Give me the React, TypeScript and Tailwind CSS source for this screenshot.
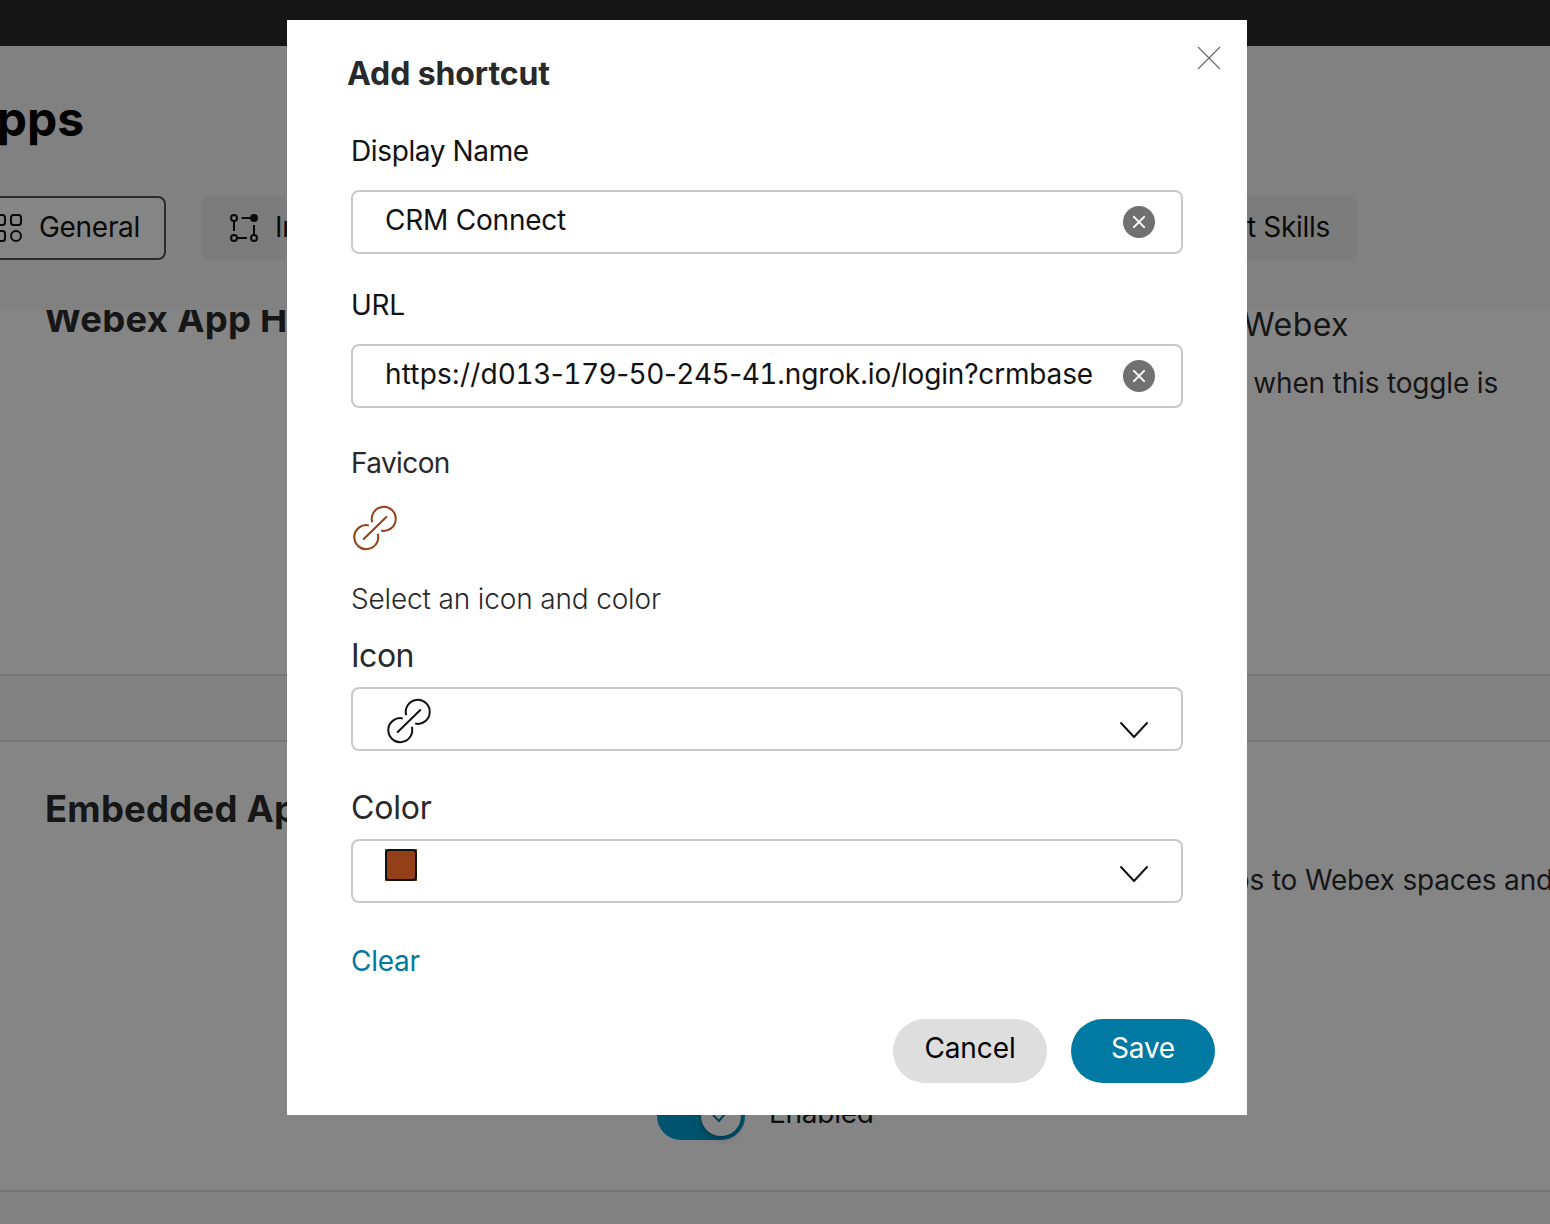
import type { ReactNode } from "react";

function LinkIcon({ className }: { className?: string }) {
  return (
    <svg width="48" height="48" viewBox="0 0 48 48" fill="none" stroke="currentColor" strokeWidth="2" strokeLinecap="round" className={className}>
      <path d="M21.2 18.2A12 12 0 1 1 30.2 26.6" strokeLinecap="butt" />
      <path d="M26.8 29.8A12 12 0 1 1 17.8 21.4" strokeLinecap="butt" />
      <path d="M12.7 35L35.3 13" />
    </svg>
  );
}

function GridIcon() {
  return (
    <svg width="28" height="28" viewBox="0 0 28 28" fill="none" stroke="currentColor" strokeWidth="2" className="shrink-0">
      <rect x="1" y="1" width="10" height="10" rx="2.5" />
      <rect x="17" y="1" width="10" height="10" rx="2.5" />
      <rect x="1" y="17" width="10" height="10" rx="2.5" />
      <circle cx="22" cy="22" r="5" />
    </svg>
  );
}

function NodesIcon() {
  return (
    <svg width="28" height="28" viewBox="0 0 28 28" fill="none" stroke="currentColor" strokeWidth="2" className="shrink-0">
      <circle cx="4" cy="4" r="3" />
      <circle cx="24" cy="4" r="3" fill="currentColor" />
      <circle cx="4" cy="24" r="3" />
      <circle cx="24" cy="24" r="3" />
      <path d="M11.5 4H21M4 7V17M24 11V21M7 24H17" />
    </svg>
  );
}

function Chevron({ className }: { className?: string }) {
  return (
    <svg width="30" height="18" viewBox="0 0 30 18" fill="none" stroke="#121212" strokeWidth="2" strokeLinecap="round" strokeLinejoin="round" className={className}>
      <path d="M2 2L15 16L28 2" />
    </svg>
  );
}

function ClearButton() {
  return (
    <button aria-label="Clear field" className="shrink-0">
      <svg width="32" height="32" viewBox="0 0 32 32" fill="none">
        <circle cx="16" cy="16" r="16" fill="#707070" />
        <path d="M10.9 10.9L21.1 21.1M21.1 10.9L10.9 21.1" stroke="#fff" strokeWidth="2" strokeLinecap="round" />
      </svg>
    </button>
  );
}

function TextField({ children }: { children: ReactNode }) {
  return (
    <div className="mt-[19px] flex h-16 items-center justify-between rounded-lg border-2 border-[#c9c9c9] bg-white pl-8 pr-[26px] text-[#121212]">
      {children}
      <ClearButton />
    </div>
  );
}

function Tab({ icon, label, className }: { icon?: ReactNode; label: string; className: string }) {
  return (
    <div className={`flex h-16 shrink-0 items-center rounded-lg ${className}`}>
      {icon}
      <span className="mb-[3px] ml-[17px] whitespace-nowrap tracking-[-0.3px]">{label}</span>
    </div>
  );
}

export default function App() {
  return (
    <div className="relative flex h-[1224px] w-[1550px] flex-col overflow-hidden bg-[#818181] font-['Inter',sans-serif] text-[28px] leading-10 text-[#161616]">
      <div className="h-[46px] shrink-0 bg-[#161616]" />

      <header className="h-[264px] shrink-0 overflow-hidden">
        <h1 className="-ml-[39px] mt-[45px] text-[48px] font-bold leading-[56px] text-black">Apps</h1>
        <nav className="mt-[49px] flex text-[#0a0a0a]">
          <Tab icon={<GridIcon />} label="General" className="-ml-[34px] w-[200px] border-2 border-[#2b2b2b] bg-[#858585] pl-[26px]" />
          <Tab icon={<NodesIcon />} label="Integrations" className="ml-9 bg-[#7c7c7c] pl-7 pr-[26px]" />
          <Tab label="Assistant Skills" className="ml-auto mr-[193px] bg-[#7c7c7c] pl-3 pr-[27px]" />
        </nav>
      </header>

      <section className="flex h-[366px] shrink-0 justify-between overflow-hidden border-b-2 border-[#757575] bg-[#858585] pl-11">
        <h2 className="-mt-[15px] text-[36.5px] font-bold leading-[48px] tracking-[0.25px]">Webex App Hub</h2>
        <div className="-mt-[5px] whitespace-nowrap text-right">
          <p className="mr-[201px] text-[32px] tracking-[0.45px]">Webex</p>
          <p className="mr-[52px] mt-[18px] tracking-[-0.17px]">when this toggle is</p>
        </div>
      </section>

      <div className="h-16 shrink-0" />

      <section className="h-[452px] shrink-0 overflow-hidden border-y-2 border-[#757575] bg-[#858585]">
        <div className="flex h-[350px] justify-between pl-[45px]">
          <h2 className="mt-[43px] text-[36.5px] font-bold leading-[48px] tracking-[0.2px]">Embedded Apps</h2>
          <p className="-mr-[3px] mt-[118px] whitespace-nowrap tracking-[-0.17px]">apps to Webex spaces and</p>
        </div>
        <div className="flex items-center pl-[657px]">
          <div className="flex h-12 w-[88px] justify-end rounded-full bg-[#00536d] p-1">
            <div className="flex size-10 items-center justify-center rounded-full bg-[#858585] shadow-[0_2px_6px_rgba(0,0,0,0.35)]">
              <svg width="24" height="24" viewBox="0 0 24 24" fill="none" stroke="#00415a" strokeWidth="2">
                <path d="M4 11L10 17L20 5" />
              </svg>
            </div>
          </div>
          <span className="mb-1.5 ml-6 tracking-[-0.25px] text-[#0d0d0d]">Enabled</span>
        </div>
      </section>

      <div role="dialog" className="absolute left-[287px] top-5 h-[1095px] w-[960px] bg-white pt-[34px]">
        <button aria-label="Close" className="absolute right-[26px] top-[26px]">
          <svg width="24" height="24" viewBox="0 0 24 24" stroke="#666" strokeWidth="1.1">
            <path d="M1 1L23 23M23 1L1 23" />
          </svg>
        </button>

        <h2 className="pl-[60px] text-[32px] font-bold tracking-[-0.1px] text-[#292929]">Add shortcut</h2>

        <div className="flex flex-col px-16">
          <label className="mt-[37px] tracking-[-0.38px] text-[#121212]">Display Name</label>
          <TextField>
            <span className="mb-1 tracking-[-0.22px]">CRM Connect</span>
          </TextField>

          <label className="mt-[31px] tracking-[-0.3px] text-[#121212]">URL</label>
          <TextField>
            <span className="mb-1 whitespace-nowrap">
              <span className="tracking-[0.15px]">https://d</span>
              <span className="tracking-[-0.5px]">
                {"013-179-50-245-41".split(/(\d+)/).map((part, i) => (
                  <span key={i} className={i % 2 ? "tabular-nums" : ""}>{part}</span>
                ))}
              </span>
              <span className="tracking-[-0.17px]">.ngrok.io/login?crmbase</span>
            </span>
          </TextField>

          <p className="mt-[35px] tracking-[-0.6px] text-[#292929]">Favicon</p>
          <LinkIcon className="mt-[21px] text-[#933f18]" />

          <p className="mt-[27px] font-light tracking-[-0.15px] text-[#292929]">Select an icon and color</p>

          <label className="mt-[17px] text-[32px] tracking-[-0.5px] text-[#292929]">Icon</label>
          <div className="mt-[11px] flex h-16 items-start justify-between rounded-lg border-2 border-[#c9c9c9] pl-8 pr-8">
            <LinkIcon className="mt-2 text-[#121212]" />
            <Chevron className="mt-8" />
          </div>

          <label className="mt-[37px] text-[32px] tracking-[-0.2px] text-[#292929]">Color</label>
          <div className="mt-[11px] flex h-16 items-start justify-between rounded-lg border-2 border-[#c9c9c9] pl-8 pr-8">
            <div className="mt-2 size-8 bg-[#933f18]">
              <div className="size-8 rounded-[4px] border-2 border-[#121212]" />
            </div>
            <Chevron className="mt-6" />
          </div>

          <a className="mt-[38px] tracking-[-0.25px] text-[#007aa3]">Clear</a>
        </div>

        <div className="mt-[38px] flex justify-end gap-6 pr-8">
          <button className="h-16 w-[154px] rounded-full bg-[#dedede] pb-1.5 tracking-[-0.1px] text-black">Cancel</button>
          <button className="h-16 w-36 rounded-full bg-[#007aa3] pb-1.5 tracking-[-0.2px] text-white">Save</button>
        </div>
      </div>
    </div>
  );
}
